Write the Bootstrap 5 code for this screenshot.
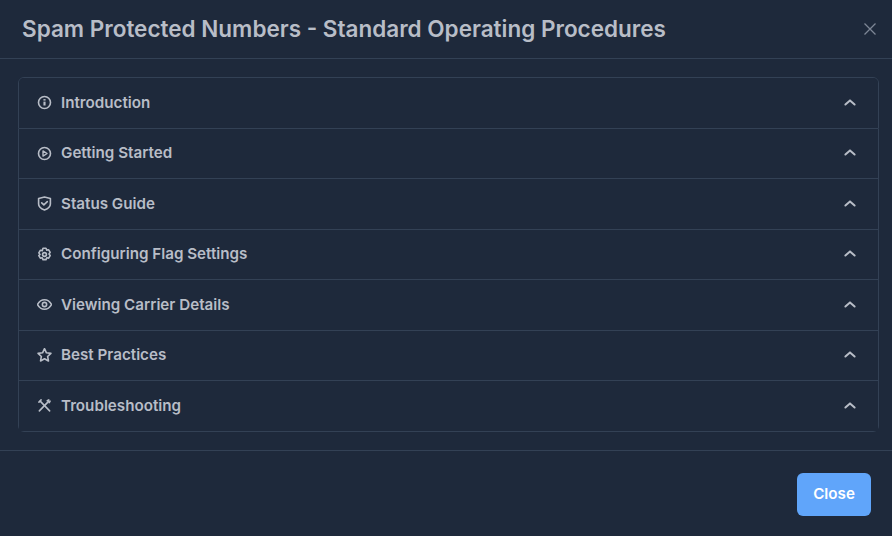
<!DOCTYPE html>
<html lang="en">
<head>
  <meta charset="UTF-8" />
  <meta name="viewport" content="width=device-width, initial-scale=1" />
  <title>Spam Protected Numbers - SOP</title>
  <link href="https://cdn.jsdelivr.net/npm/bootstrap@5.3.3/dist/css/bootstrap.min.css" rel="stylesheet" />
  <style>
    html, body {
      height: 100%;
    }
    body {
      background-color: #1e293b;
      font-family: Inter, "Liberation Sans", sans-serif;
      overflow: hidden;
    }
    .sop-modal {
      height: 536px;
      background-color: #1e293b;
      border: 0;
      border-radius: 0;
    }
    .sop-modal .modal-header {
      height: 59px;
      padding: 0 15px 1px 22px;
      border-bottom: 1px solid #334155;
      border-radius: 0;
    }
    .sop-modal .modal-title {
      font-size: 22.5px;
      font-weight: 600;
      line-height: 1.2;
      color: #b8bdc7;
    }
    .sop-x {
      padding: 0;
      border: 0;
      background: none;
      color: #7d8695;
      line-height: 0;
    }
    .sop-modal .modal-body {
      flex: none;
      padding: 18px 13px 18px 18px;
    }
    .sop-modal .accordion-item {
      background-color: #1e293b;
      border-color: #334155;
    }
    .sop-modal .accordion-button {
      padding: 15.75px 20px 16.25px 18px;
      background-color: #1e293b;
      box-shadow: none;
      color: #b8bdc7;
      font-size: 15.2px;
      font-weight: 600;
      line-height: 17.5px;
      gap: 9px;
    }
    .sop-modal .accordion-button::after {
      display: none;
    }
    .sop-icon {
      flex: none;
      color: #b8bdc7;
    }
    .sop-chevron {
      flex: none;
      margin-left: auto;
      margin-right: 1px;
      color: #b8bdc7;
    }
    .sop-modal .modal-footer {
      height: 86px;
      padding: 22px 21px 20px 0;
      border-top: 1px solid #334155;
      border-radius: 0;
    }
    .sop-close {
      width: 74px;
      height: 43px;
      margin: 0;
      padding: 0;
      border: 0;
      border-radius: 6px;
      background-color: #60a5fa;
      color: #fff;
      font-size: 15.2px;
      font-weight: 600;
    }
  </style>
</head>
<body>

<svg class="d-none">
  <symbol id="chev" viewBox="0 0 14 14"><path d="M2.400 8.500 7 4.400l4.600 4.100" fill="none" stroke="currentColor" stroke-width="2" stroke-linecap="round" stroke-linejoin="round"/></symbol>
</svg>

<div class="modal-content sop-modal">
  <div class="modal-header justify-content-between">
    <h5 class="modal-title">Spam Protected Numbers - Standard Operating Procedures</h5>
    <button type="button" class="sop-x" aria-label="Close">
      <svg width="14" height="14" viewBox="0 0 14 14"><path d="M1.500 1.500l11 11M12.500 1.500l-11 11" fill="none" stroke="currentColor" stroke-width="1.3"/></svg>
    </button>
  </div>

  <div class="modal-body">
    <div class="accordion">
      <div class="accordion-item">
        <button class="accordion-button" type="button">
          <svg class="sop-icon" width="15" height="15" viewBox="0 0 14 14" fill="none" stroke="currentColor" stroke-width="1.5"><circle cx="7" cy="7" r="5.600"/><path d="M7 6.200v3.600" stroke-width="2"/><path d="M7 3.800v1.400" stroke-width="2"/></svg>
          <span>Introduction</span>
          <svg class="sop-chevron" width="14" height="14"><use href="#chev"/></svg>
        </button>
      </div>
      <div class="accordion-item">
        <button class="accordion-button" type="button">
          <svg class="sop-icon" width="15" height="15" viewBox="0 0 14 14" fill="none" stroke="currentColor" stroke-width="1.5"><circle cx="7" cy="7" r="5.600"/><path d="M5.600 4.600 9.400 7 5.600 9.400z" stroke-width="1.300" stroke-linejoin="round"/></svg>
          <span>Getting Started</span>
          <svg class="sop-chevron" width="14" height="14"><use href="#chev"/></svg>
        </button>
      </div>
      <div class="accordion-item">
        <button class="accordion-button" type="button">
          <svg class="sop-icon" width="15" height="15" viewBox="0 0 14 14" fill="none" stroke="currentColor" stroke-width="1.5" stroke-linejoin="round" stroke-linecap="round"><path d="M7 .9 12.500 2.300v5.100c0 2.600-2.300 4.400-5.500 5.700-3.200-1.300-5.500-3.100-5.500-5.700V2.300z"/><path d="M4.400 6.400 6.400 8.300 9.600 5.200"/></svg>
          <span>Status Guide</span>
          <svg class="sop-chevron" width="14" height="14"><use href="#chev"/></svg>
        </button>
      </div>
      <div class="accordion-item">
        <button class="accordion-button" type="button">
          <svg class="sop-icon" width="15" height="15" viewBox="0 0 14 14" fill="none" stroke="currentColor" stroke-width="1.5" stroke-linejoin="round"><path d="M5.600 1.200h2.800l.7 1.700 1.800-.3 1.400 2.400-1.100 1.500 1.100 1.500-1.400 2.400-1.800-.3-.7 1.700H5.600l-.7-1.700-1.800.3-1.400-2.400L2.800 7 1.700 5.500l1.400-2.400 1.800.3z"/><circle cx="7" cy="7" r="1.800"/></svg>
          <span>Configuring Flag Settings</span>
          <svg class="sop-chevron" width="14" height="14"><use href="#chev"/></svg>
        </button>
      </div>
      <div class="accordion-item">
        <button class="accordion-button" type="button">
          <svg class="sop-icon" width="15" height="15" viewBox="0 0 14 14" fill="none" stroke="currentColor" stroke-width="1.5"><path d="M.5 7C2 4.100 4.200 2.600 7 2.600s5 1.500 6.500 4.400c-1.500 2.900-3.700 4.400-6.500 4.400S2 9.900.5 7z" stroke-linejoin="round"/><circle cx="7" cy="7" r="2"/></svg>
          <span>Viewing Carrier Details</span>
          <svg class="sop-chevron" width="14" height="14"><use href="#chev"/></svg>
        </button>
      </div>
      <div class="accordion-item">
        <button class="accordion-button" type="button">
          <svg class="sop-icon" width="15" height="15" viewBox="0 0 14 14" fill="none" stroke="currentColor" stroke-width="1.5" stroke-linejoin="round"><path d="M7 .6l1.800 3.900 4.200.5-3.100 2.900.8 4.200L7 10l-3.700 2.100.8-4.200L1 5l4.200-.5z"/></svg>
          <span>Best Practices</span>
          <svg class="sop-chevron" width="14" height="14"><use href="#chev"/></svg>
        </button>
      </div>
      <div class="accordion-item">
        <button class="accordion-button" type="button">
          <svg class="sop-icon" width="15" height="15" viewBox="0 0 14 14" fill="none" stroke="currentColor" stroke-width="1.5" stroke-linecap="round" stroke-linejoin="round"><path d="M3.200 3.200 11.800 12"/><path d="M1.800 3.800 3.800 1.800"/><path d="M10.600 3.400 2.200 12"/><path d="M9.600 2.600 11 1.800M11.400 4.400l.8-1.400"/></svg>
          <span>Troubleshooting</span>
          <svg class="sop-chevron" width="14" height="14"><use href="#chev"/></svg>
        </button>
      </div>
    </div>
  </div>

  <div class="modal-footer">
    <button type="button" class="btn sop-close">Close</button>
  </div>
</div>

<script src="https://cdn.jsdelivr.net/npm/bootstrap@5.3.3/dist/js/bootstrap.bundle.min.js"></script>
</body>
</html>
